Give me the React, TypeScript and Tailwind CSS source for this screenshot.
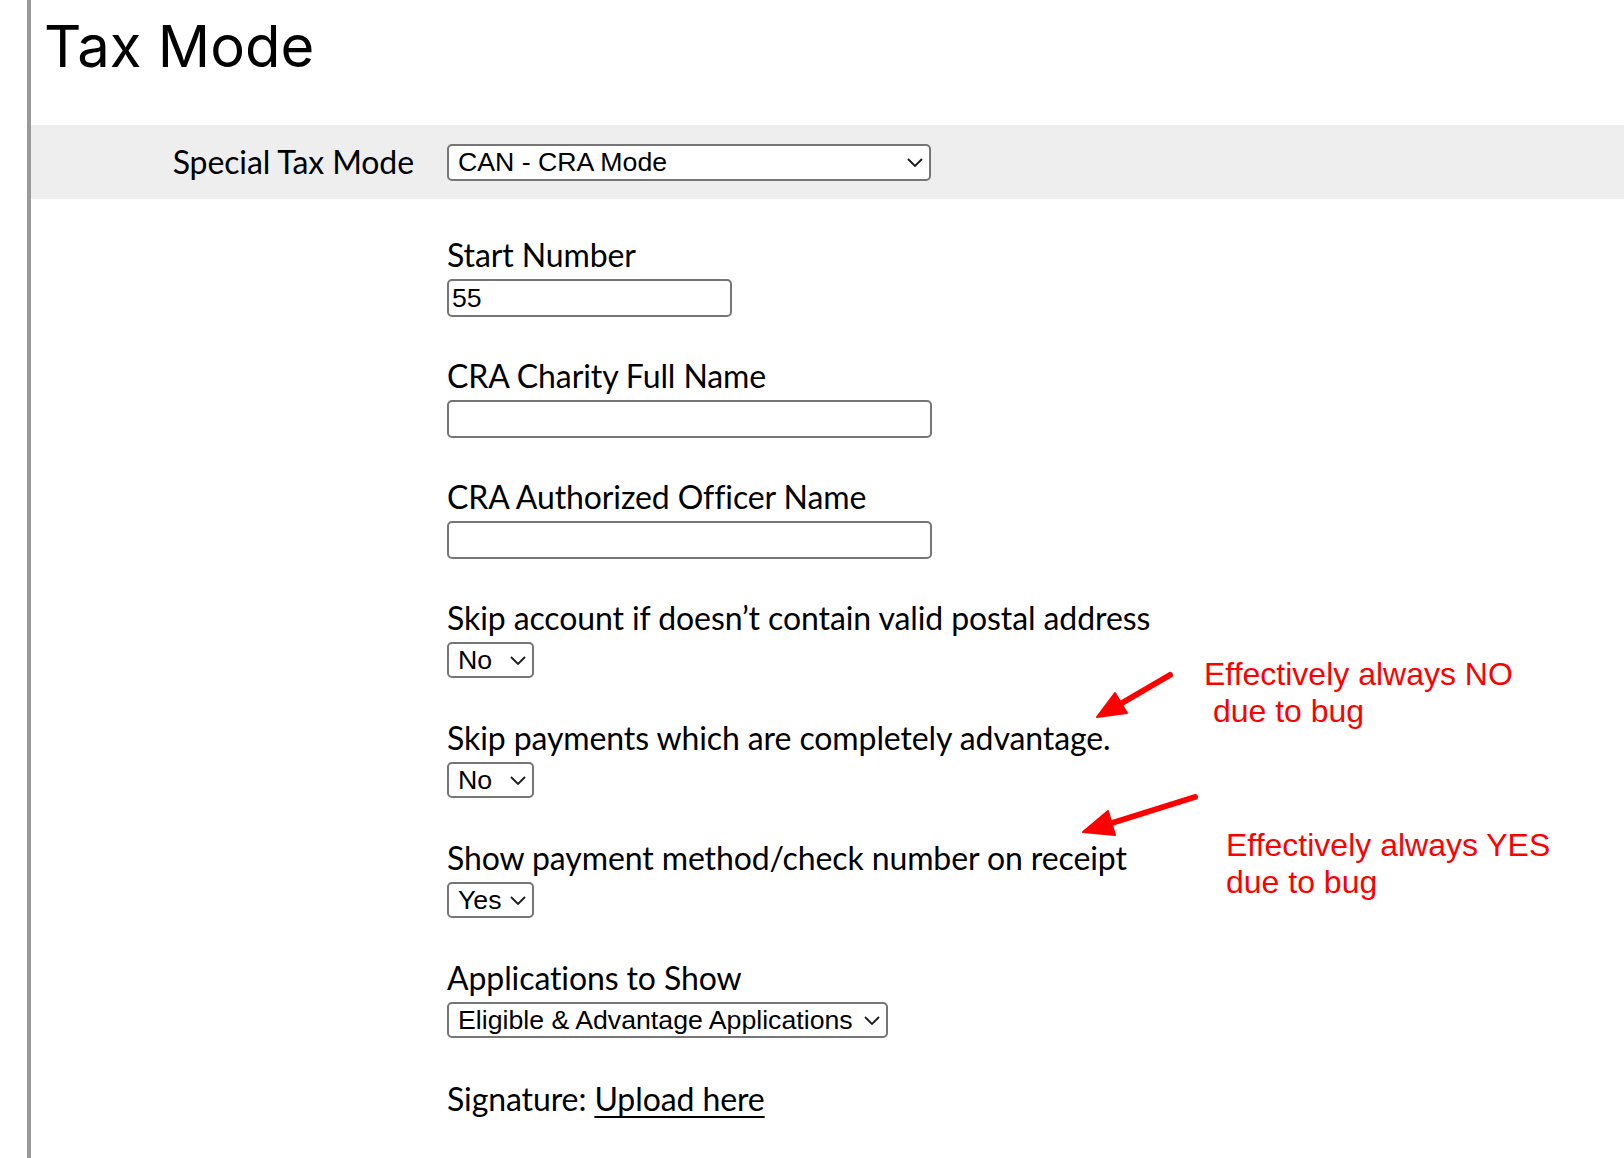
import React from 'react';

const labelFont = "font-['Lato',sans-serif] text-[32px] leading-[38px] tracking-[-0.1px] text-black";
const controlFont = "font-['Liberation_Sans',Arial,sans-serif] text-[26.7px] text-black";

const Chevron = () => (
  <svg width="16" height="9" viewBox="0 0 16 9" fill="none" className="shrink-0">
    <path d="M1 1l7 7 7-7" stroke="#1a1a1a" strokeWidth="1.8" />
  </svg>
);

interface SelectBoxProps {
  value: string;
  className?: string;
}

const SelectBox: React.FC<SelectBoxProps> = ({ value, className }) => (
  <div
    className={`flex items-center justify-between rounded-[5px] border-2 border-[#767676] bg-white pl-[9px] pr-[6px] ${controlFont} ${className ?? ''}`}
  >
    <span className="whitespace-nowrap">{value}</span>
    <Chevron />
  </div>
);

interface FieldProps {
  label: string;
  children: React.ReactNode;
  className?: string;
}

const Field: React.FC<FieldProps> = ({ label, children, className }) => (
  <div className={className}>
    <div className={labelFont}>{label}</div>
    <div className="mt-[5px]">{children}</div>
  </div>
);

const TextInput = ({ value = '', width }: { value?: string; width: string }) => (
  <input
    defaultValue={value}
    className={`block h-[38px] ${width} rounded-[5px] border-2 border-[#767676] bg-white px-[3px] outline-none ${controlFont}`}
  />
);

export default function App() {
  return (
    <div className="relative h-[1158px] w-full overflow-hidden bg-white">
      <div className="ml-[27px] h-full border-l-4 border-[#9a9a9a]">
        {/* title */}
        <div className="h-[125px] pl-[13px] pt-[11px]">
          <h1 className="font-['Inter',sans-serif] text-[58px] font-normal leading-[70px] text-black">
            Tax Mode
          </h1>
        </div>

        {/* special tax mode row */}
        <div className="flex h-[74px] items-center bg-[#eeeeee]">
          <div className={`w-[383px] text-right ${labelFont}`}>Special Tax Mode</div>
          <SelectBox value="CAN - CRA Mode" className="ml-[33px] h-[37px] w-[484px]" />
        </div>

        {/* form */}
        <div className="pl-[416px] pt-[37px]">
          <Field label="Start Number" className="mb-[40px]">
            <TextInput value="55" width="w-[285px]" />
          </Field>
          <Field label="CRA Charity Full Name" className="mb-[40px]">
            <TextInput width="w-[485px]" />
          </Field>
          <Field label="CRA Authorized Officer Name" className="mb-[40px]">
            <TextInput width="w-[485px]" />
          </Field>
          <Field label="Skip account if doesn’t contain valid postal address" className="mb-[41px]">
            <SelectBox value="No" className="h-[36px] w-[87px]" />
          </Field>
          <Field label="Skip payments which are completely advantage." className="mb-[41px]">
            <SelectBox value="No" className="h-[36px] w-[87px]" />
          </Field>
          <Field label="Show payment method/check number on receipt" className="mb-[41px]">
            <SelectBox value="Yes" className="h-[36px] w-[87px]" />
          </Field>
          <Field label="Applications to Show" className="mb-[42px]">
            <SelectBox value="Eligible & Advantage Applications" className="h-[36px] w-[441px]" />
          </Field>
          <div className={labelFont}>
            Signature:{' '}
            <a href="#" className="text-black underline decoration-2 underline-offset-[5px]">
              Upload here
            </a>
          </div>
        </div>
      </div>

      {/* annotations */}
      <svg
        className="pointer-events-none absolute left-0 top-0"
        width="1624"
        height="1158"
        viewBox="0 0 1624 1158"
      >
        <g fill="#ff0000" stroke="#ff0000" strokeLinecap="round" strokeLinejoin="round">
          <line x1="1170" y1="675" x2="1122" y2="703" strokeWidth="6" />
          <polygon points="1097,717 1127,713 1115,693" strokeWidth="2" />
          <line x1="1195" y1="797" x2="1112" y2="823" strokeWidth="6" />
          <polygon points="1083,832 1115,835 1108,811" strokeWidth="2" />
        </g>
      </svg>
      <div className="pointer-events-none absolute left-[1204px] top-[656px] whitespace-pre font-['Liberation_Sans',Arial,sans-serif] text-[32px] leading-[37px] text-[#ff0000]">
        {'Effectively always NO\n due to bug'}
      </div>
      <div className="pointer-events-none absolute left-[1226px] top-[827px] whitespace-pre font-['Liberation_Sans',Arial,sans-serif] text-[32px] leading-[37px] text-[#ff0000]">
        {'Effectively always YES\ndue to bug'}
      </div>
    </div>
  );
}
